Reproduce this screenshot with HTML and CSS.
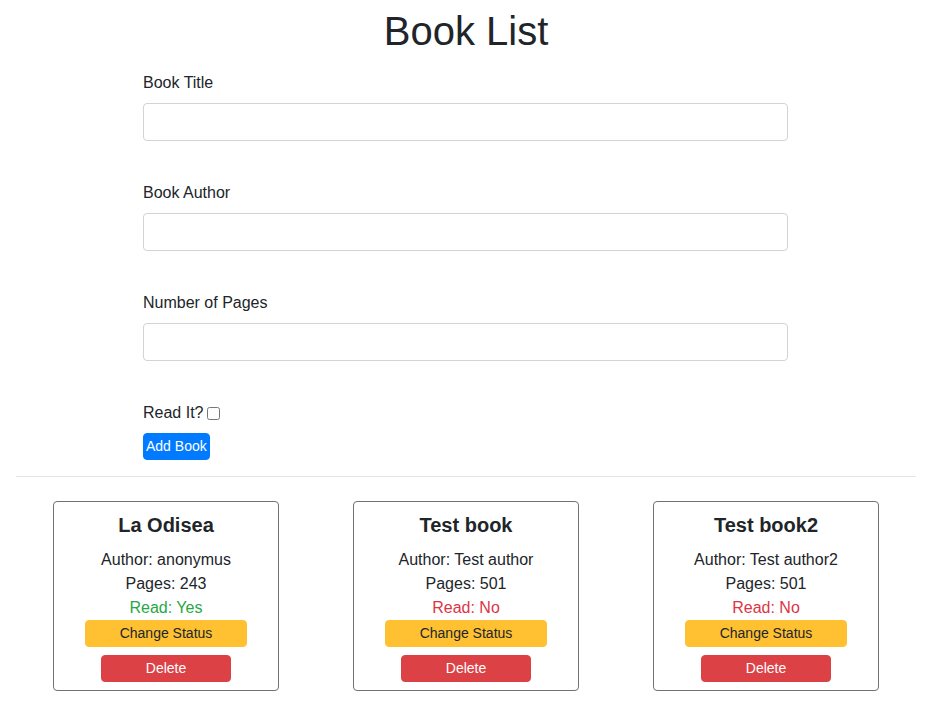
FILE: index.html
```html
<!DOCTYPE html>
<html lang="en">
<head>
<meta charset="utf-8">
<title>Book List</title>
<link rel="stylesheet" href="styles.css">
</head>
<body>
<div class="page">
  <h1 class="title">Book List</h1>
  <form class="book-form">
    <div class="field">
      <label class="field-label" for="title">Book Title</label>
      <input class="field-input" id="title" type="text">
    </div>
    <div class="field">
      <label class="field-label" for="author">Book Author</label>
      <input class="field-input" id="author" type="text">
    </div>
    <div class="field">
      <label class="field-label" for="pages">Number of Pages</label>
      <input class="field-input" id="pages" type="number">
    </div>
    <div class="check-row">
      <label class="field-label" for="read">Read It?</label>
      <input class="check" id="read" type="checkbox">
    </div>
    <button type="button" class="btn-add">Add Book</button>
  </form>
  <hr class="divider">
  <div class="cards">
    <div class="col">
      <div class="card">
        <h3 class="card-title">La Odisea</h3>
        <p class="card-line">Author: anonymus</p>
        <p class="card-line">Pages: 243</p>
        <p class="card-line read-yes">Read: Yes</p>
        <button type="button" class="btn-status">Change Status</button>
        <button type="button" class="btn-delete">Delete</button>
      </div>
    </div>
    <div class="col">
      <div class="card">
        <h3 class="card-title">Test book</h3>
        <p class="card-line">Author: Test author</p>
        <p class="card-line">Pages: 501</p>
        <p class="card-line read-no">Read: No</p>
        <button type="button" class="btn-status">Change Status</button>
        <button type="button" class="btn-delete">Delete</button>
      </div>
    </div>
    <div class="col">
      <div class="card">
        <h3 class="card-title">Test book2</h3>
        <p class="card-line">Author: Test author2</p>
        <p class="card-line">Pages: 501</p>
        <p class="card-line read-no">Read: No</p>
        <button type="button" class="btn-status">Change Status</button>
        <button type="button" class="btn-delete">Delete</button>
      </div>
    </div>
  </div>
</div>
</body>
</html>
```

FILE: styles.css
```css
* { box-sizing: border-box; }

body {
  margin: 0;
  font-family: "Liberation Sans", Arial, sans-serif;
  font-size: 16px;
  line-height: 1.5;
  color: #212529;
  background: #fff;
}

.page {
  width: 900px;
  margin-left: 16px;
}

.title {
  margin: 7px 0 0;
  font-size: 40px;
  font-weight: 400;
  line-height: 48px;
  text-align: center;
}

.book-form {
  width: 645px;
  margin: 16px 0 0 127px;
  display: flex;
  flex-direction: column;
  align-items: flex-start;
}

.field {
  width: 100%;
  display: flex;
  flex-direction: column;
  margin-bottom: 40px;
}

.field-label {
  display: block;
  line-height: 24px;
  margin-bottom: 8px;
}

.field-input {
  width: 100%;
  height: 38px;
  border: 1px solid #ced4da;
  border-radius: 4px;
  padding: 6px 12px;
  font: inherit;
  background: #fff;
}

.check-row {
  display: flex;
  align-items: center;
  gap: 4px;
  height: 24px;
  margin-bottom: 8px;
}

.check-row .field-label {
  margin: 0;
}

.check {
  width: 13px;
  height: 13px;
  margin: 0;
}

.btn-add {
  font-family: inherit;
  font-size: 14px;
  line-height: 21px;
  padding: 2px 2px;
  border: 1px solid #007bff;
  border-radius: 4px;
  background: #007bff;
  color: #fff;
}

.divider {
  margin: 16px 0 0;
  border: 0;
  border-top: 1px solid rgba(0, 0, 0, 0.1);
}

.cards {
  display: grid;
  grid-template-columns: repeat(3, 300px);
  margin-top: 24px;
}

.col {
  display: flex;
  justify-content: center;
}

.card {
  width: 226px;
  border: 1px solid #6f7378;
  border-radius: 4px;
  padding: 11px 0 8px;
  display: flex;
  flex-direction: column;
  align-items: center;
  text-align: center;
}

.card-title {
  margin: 0 0 11px;
  font-size: 20px;
  font-weight: 700;
  line-height: 24px;
}

.card-line {
  margin: 0;
  line-height: 24px;
}

.read-yes { color: #28a745; }
.read-no { color: #dc3545; }

.btn-status,
.btn-delete {
  font-family: inherit;
  font-size: 14px;
  line-height: 21px;
  height: 27px;
  padding: 2px 0;
  border: 1px solid transparent;
  border-radius: 4px;
}

.btn-status {
  width: 162px;
  background: #ffc131;
  border-color: #ffc131;
  color: #212529;
}

.btn-delete {
  width: 130px;
  margin-top: 8px;
  background: #dc4146;
  border-color: #dc4146;
  color: #fff;
}
```
